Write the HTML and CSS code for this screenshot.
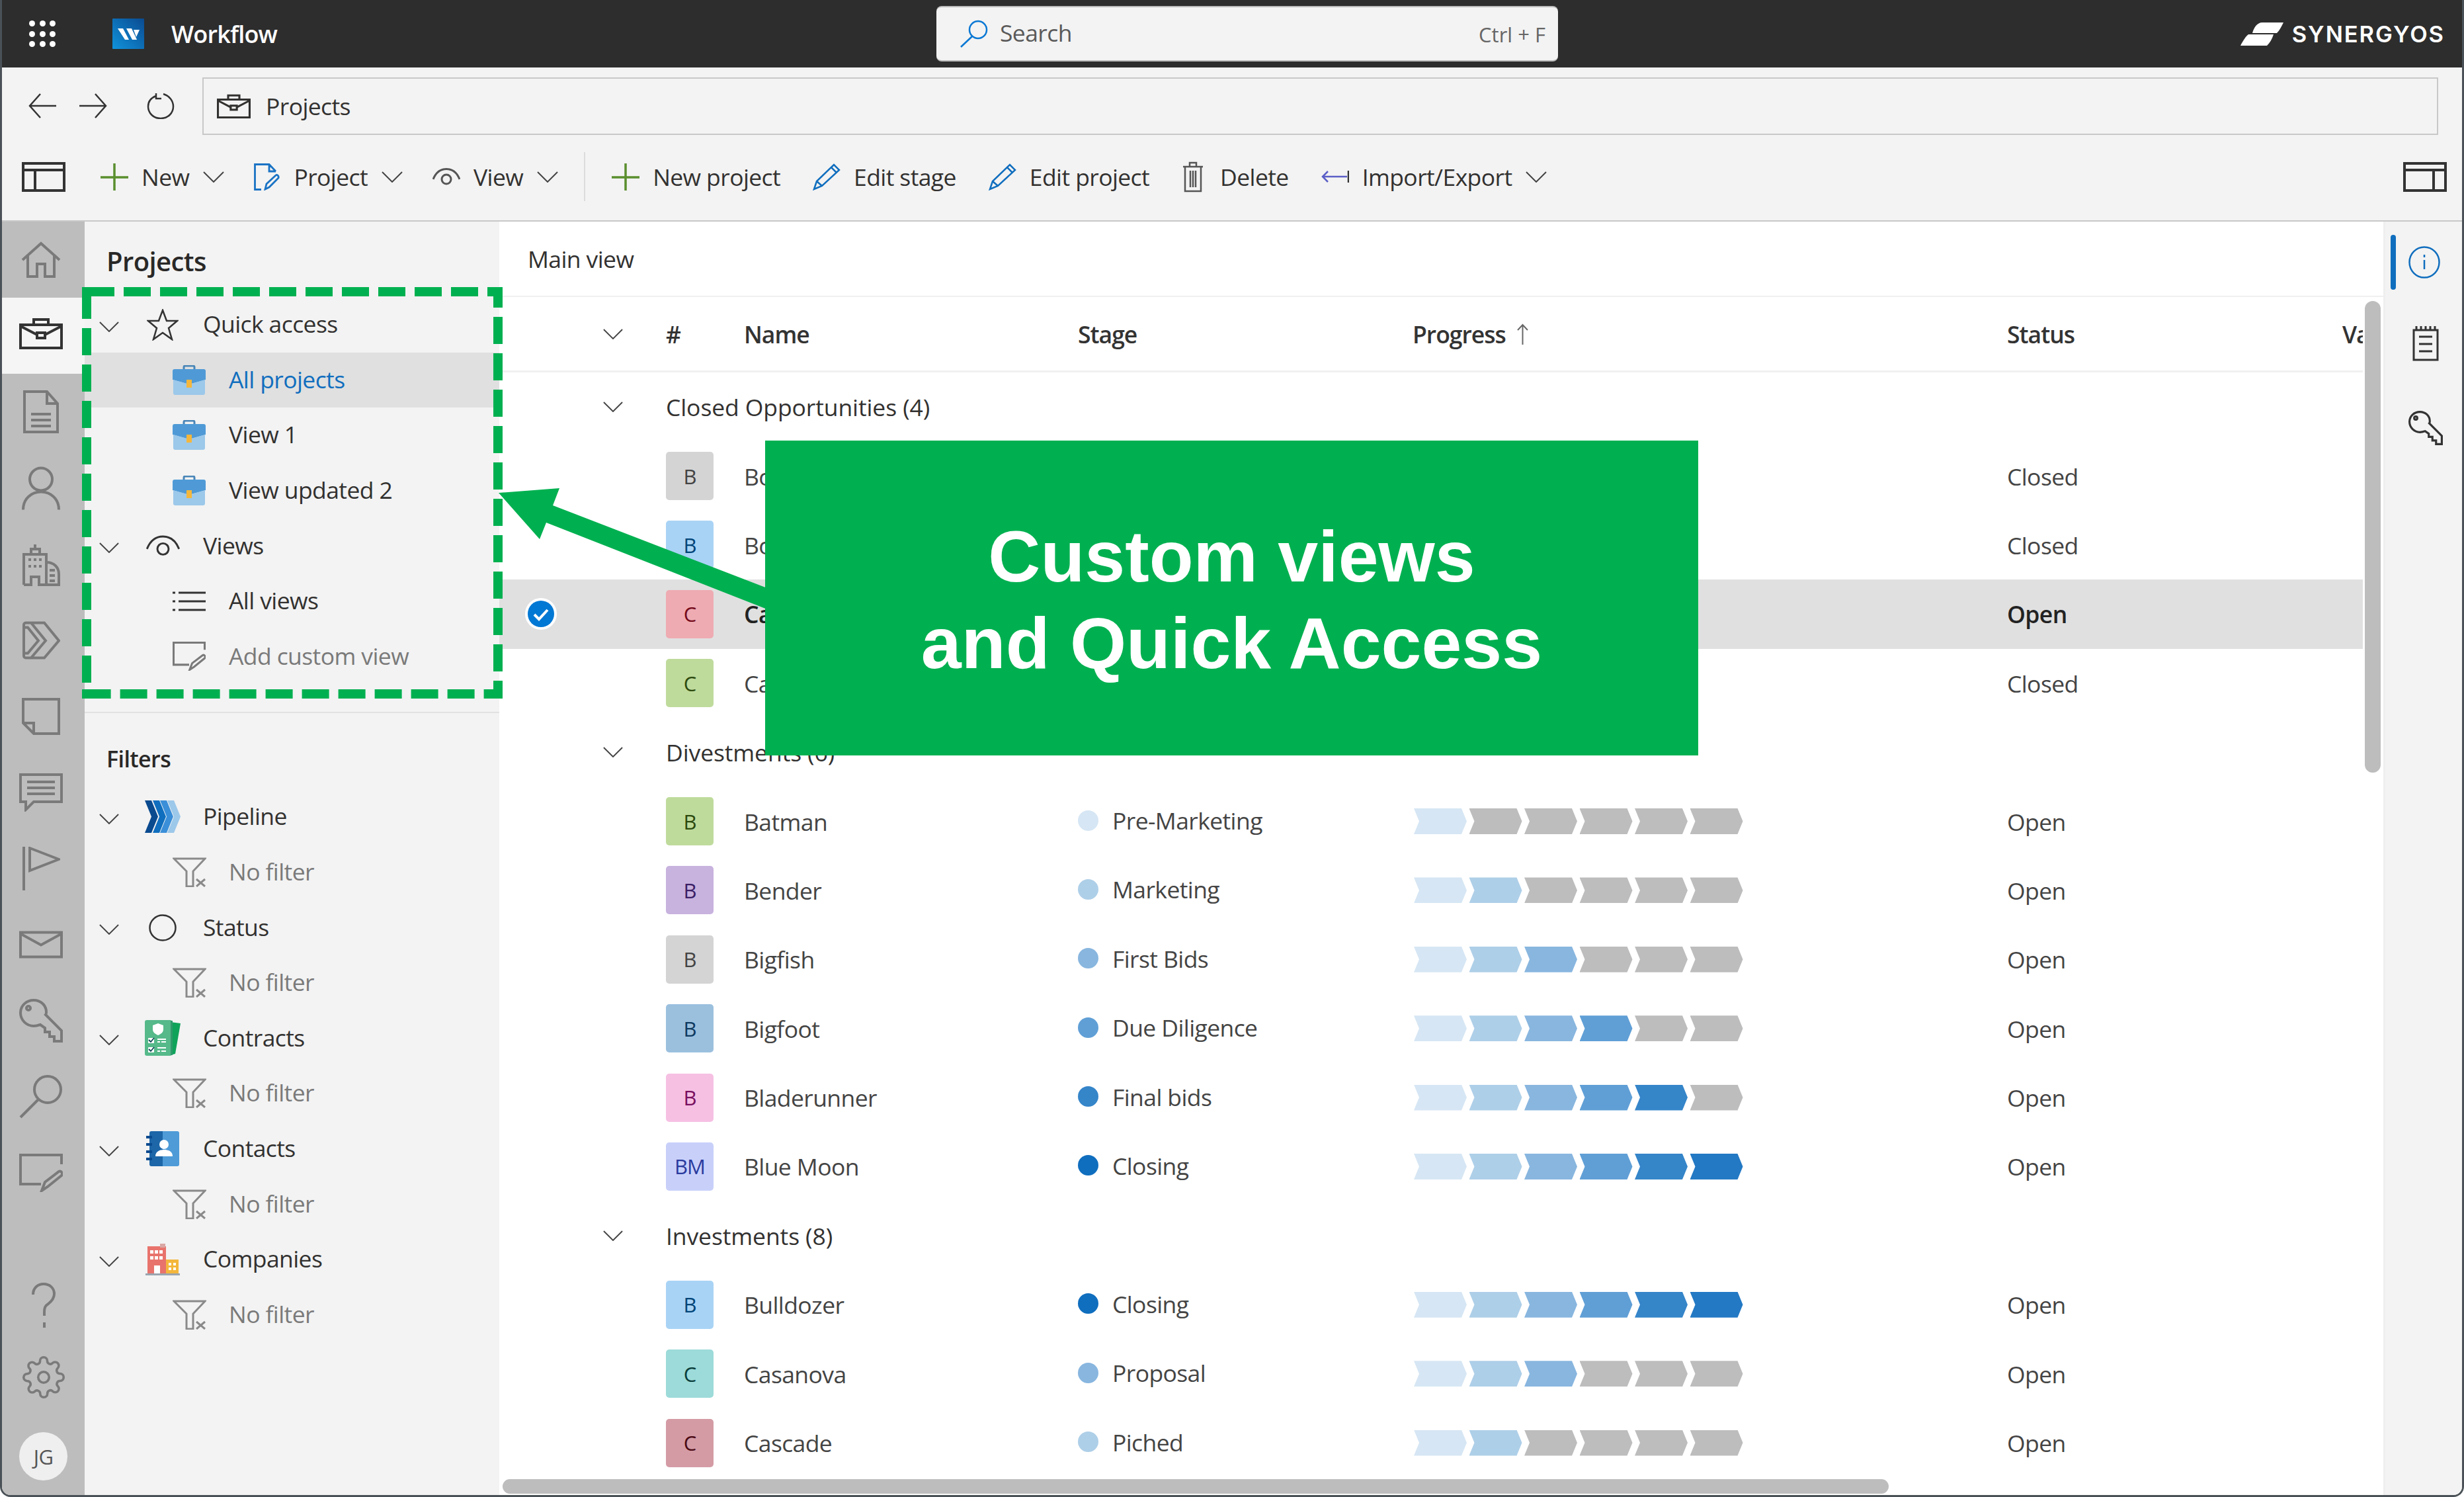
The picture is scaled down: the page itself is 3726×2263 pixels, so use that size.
FILE: index.html
```html
<!DOCTYPE html>
<html lang="en">
<head>
<meta charset="utf-8">
<title>Workflow - Projects</title>
<link rel="stylesheet" href="styles.css">
</head>
<body>
<svg class="defs" aria-hidden="true">
  <symbol id="chev" viewBox="0 0 32 17"><path d="M1 1l15 15L31 1"/></symbol>
  <symbol id="briefcase" viewBox="0 0 66 48"><path d="M2 11h62v35H2z M22 11V3h22v8 M2 13l25 13 M64 13l-25 13"/><rect x="27" y="23" width="12" height="8"/></symbol>
  <symbol id="plus" viewBox="0 0 42 41"><path d="M21 0v41 M0 21h42"/></symbol>
  <symbol id="pencil" viewBox="0 0 42 41"><path d="M2 39l4-12L32 2l8 8-26 24z M6 27l8 7 M28 6l8 8"/></symbol>
  <symbol id="eye" viewBox="0 0 42 26"><path d="M1 17C5 7 12 1.500 21 1.500S37 7 41 17"/><circle cx="21" cy="17" r="7"/></symbol>
  <symbol id="layout" viewBox="0 0 66 45"><path d="M2 2h62v41H2z M2 12h62 M20 12v31"/></symbol>
  <symbol id="bag" viewBox="0 0 50 45"><rect x="17" y="1" width="16" height="8" rx="2" fill="none" stroke="#4a86b8" stroke-width="3"/><path d="M3 6h44a3 3 0 0 1 3 3v13l-25 7-25-7V9a3 3 0 0 1 3-3z" fill="#4f9ad6"/><path d="M1 22l24 7 24-7v20a3 3 0 0 1-3 3H4a3 3 0 0 1-3-3z" fill="#9cc8ea"/><rect x="21" y="22" width="8" height="12" fill="#f4b73c"/></symbol>
  <symbol id="editnote" viewBox="0 0 66 58"><path d="M33 46H2V2h62v14 M34 56l5-13 21-16c3-2 7 3 4 6L43 50z"/></symbol>
  <symbol id="funnel" viewBox="0 0 51 45"><path d="M2 2h47L31 21v23H21V21z M36 33l13 11 M49 33L36 44"/></symbol>
  <symbol id="key" viewBox="0 0 66 66"><path d="M22 2C33 2 41 10 41 20c0 2 0 3-1 4l24 24v16H53v-7h-7v-7h-7v-6l-7-5c-3 1-6 2-10 2C11 41 2 32 2 21S11 2 22 2z"/><circle cx="14" cy="14" r="3"/></symbol>
</svg>

<div class="app">
  <header class="topbar">
    <div class="brand">
      <div class="waffle"><i></i><i></i><i></i><i></i><i></i><i></i><i></i><i></i><i></i></div>
      <svg class="wf-logo" viewBox="0 0 48 46"><defs><linearGradient id="wfg" x1="0" y1="1" x2="1" y2="0"><stop offset="0" stop-color="#1093dc"/><stop offset="1" stop-color="#0a4a90"/></linearGradient></defs><rect width="48" height="46" rx="1" fill="url(#wfg)"/><path d="M8 15h8l9 17h-6z M21 15h8l8 17h-7z M32 17h9l-5 11z" fill="#fff"/></svg>
      <span class="app-name">Workflow</span>
    </div>
    <div class="searchbox">
      <svg class="s-icon" viewBox="0 0 44 42"><circle cx="29" cy="15" r="13"/><path d="M20 25L3 41"/></svg>
      <span class="s-text">Search</span>
      <span class="s-key">Ctrl + F</span>
    </div>
    <div class="synergy">
      <svg class="sy-mark" viewBox="0 0 65 35"><path d="M18 16C20 8 25 0 33 0H65C62 6 59 12 55 16Z M0 35C4 27 8 21 12 18H50C48 25 44 31 40 35Z" fill="#fff"/></svg>
      <span class="sy-text">SYNERGYOS</span>
    </div>
  </header>

  <div class="addressbar">
    <svg class="nav nav-back" viewBox="0 0 42 38"><path d="M18 1L2 19l16 18 M2 19h40"/></svg>
    <svg class="nav nav-fwd" viewBox="0 0 42 38"><path d="M24 1l16 18-16 18 M0 19h40"/></svg>
    <svg class="nav nav-ref" viewBox="0 0 42 40"><path d="M14 5C6 8 2 14 2 21c0 10 8 18 19 18s19-8 19-18c0-9-6-16-15-19 M14 1v8h8"/></svg>
    <div class="address">
      <svg class="addr-icon"><use href="#briefcase"/></svg>
      <span>Projects</span>
    </div>
  </div>

  <nav class="toolbar">
    <svg class="tb-layout"><use href="#layout"/></svg>
    <div class="tool"><svg class="ic-plus"><use href="#plus"/></svg><span>New</span><svg class="tb-chev"><use href="#chev"/></svg></div>
    <div class="tool"><svg class="ic-doc" viewBox="0 0 40 41"><path d="M11 39.500H1.500V1.500H23L33 12 M23 1.500V12H33"/><path d="M17 39l2-8L33 18c2-1.500 5 1 4 4L23 36z"/></svg><span>Project</span><svg class="tb-chev"><use href="#chev"/></svg></div>
    <div class="tool"><svg class="ic-eye"><use href="#eye"/></svg><span>View</span><svg class="tb-chev"><use href="#chev"/></svg></div>
    <div class="tb-sep"></div>
    <div class="tool wide"><svg class="ic-plus"><use href="#plus"/></svg><span>New project</span></div>
    <div class="tool wide"><svg class="ic-pencil"><use href="#pencil"/></svg><span>Edit stage</span></div>
    <div class="tool wide"><svg class="ic-pencil"><use href="#pencil"/></svg><span>Edit project</span></div>
    <div class="tool wide t-del"><svg class="ic-trash" viewBox="0 0 34 47"><path d="M2 8h30 M12 8V2h10v6 M5 8v37h24V8 M13 14v25 M17 14v25 M21 14v25"/></svg><span>Delete</span></div>
    <div class="tool"><svg class="ic-imp" viewBox="0 0 42 18"><path class="purple" d="M10 1L2 9l8 8 M2 9h37"/><path d="M41 0v18"/></svg><span>Import/Export</span><svg class="tb-chev"><use href="#chev"/></svg></div>
    <svg class="tb-layout-r" viewBox="0 0 66 45"><path d="M2 2h62v41H2z M2 12h62 M46 12v31"/></svg>
  </nav>

  <div class="workspace">
    <aside class="rail">
      <div class="rail-item"><svg class="ri w60" viewBox="0 0 60 55"><path d="M2 28L30 3l28 25 M10 21v32h14V34h12v19h14V21"/></svg></div>
      <div class="rail-item active"><svg class="ri w66b"><use href="#briefcase"/></svg></div>
      <div class="rail-item"><svg class="ri w54" viewBox="0 0 54 65"><path d="M2 2h34l16 18v43H2z M36 2v18h16 M12 36h30 M12 45h30 M12 54h30"/></svg></div>
      <div class="rail-item"><svg class="ri w58" viewBox="0 0 58 65"><circle cx="29" cy="19" r="17"/><path d="M2 65c0-16 12-27 27-27s27 11 27 27"/></svg></div>
      <div class="rail-item"><svg class="ri w58" viewBox="0 0 58 66"><path d="M3 64V18h34v46 M3 64h11V52h12v12h11 M14 18v-8h13v8 M20 10V3 M10 26h4 M18 26h4 M26 26h4 M10 36h4 M18 36h4 M26 36h4 M37 30c12 0 19 8 19 18v16H37 M42 42h8 M42 50h8 M42 58h8"/></svg></div>
      <div class="rail-item"><svg class="ri w58" viewBox="0 0 58 59"><path d="M3 6a3 3 0 0 1 3-3h28l22 27-22 26H6a3 3 0 0 1-3-3z M14 3l22 27-22 26 M3 10h6l16 20L9 49H3"/></svg></div>
      <div class="rail-item"><svg class="ri w58" viewBox="0 0 58 56"><path d="M2 2h54v52H18L2 38z M2 38h16v16"/></svg></div>
      <div class="rail-item"><svg class="ri w66" viewBox="0 0 66 58"><path d="M2 2h62v41H22L10 55V43H2z M12 13h42 M12 22h42 M12 31h42"/></svg></div>
      <div class="rail-item"><svg class="ri w58" viewBox="0 0 58 66"><path d="M3 0v66 M12 2l44 17-44 17z"/></svg></div>
      <div class="rail-item"><svg class="ri w66" viewBox="0 0 66 41"><path d="M2 2h62v37H2z M2 4l31 17L64 4"/></svg></div>
      <div class="rail-item"><svg class="ri w66k"><use href="#key"/></svg></div>
      <div class="rail-item"><svg class="ri w66k" viewBox="0 0 66 66"><circle cx="43" cy="22" r="20"/><path d="M29 37L2 64"/></svg></div>
      <div class="rail-item"><svg class="ri w66"><use href="#editnote"/></svg></div>
      <div class="rail-bottom">
        <svg class="ri help" viewBox="0 0 38 68"><path d="M3 18C3 8 10 2 19 2s16 6 16 15c0 7-4 11-9 15-5 3-6 6-6 13v5 M20 60v8"/></svg>
        <svg class="ri gear" viewBox="0 0 24 24"><circle cx="12" cy="12" r="3"/><path d="M19.4 15a1.65 1.65 0 0 0 .33 1.82l.06.06a2 2 0 0 1 0 2.83 2 2 0 0 1-2.83 0l-.06-.06a1.65 1.65 0 0 0-1.82-.33 1.65 1.65 0 0 0-1 1.51V21a2 2 0 0 1-2 2 2 2 0 0 1-2-2v-.09A1.65 1.65 0 0 0 9 19.4a1.65 1.65 0 0 0-1.82.33l-.06.06a2 2 0 0 1-2.83 0 2 2 0 0 1 0-2.83l.06-.06a1.65 1.65 0 0 0 .33-1.82 1.65 1.65 0 0 0-1.51-1H3a2 2 0 0 1-2-2 2 2 0 0 1 2-2h.09A1.65 1.65 0 0 0 4.6 9a1.65 1.65 0 0 0-.33-1.82l-.06-.06a2 2 0 0 1 0-2.83 2 2 0 0 1 2.83 0l.06.06a1.65 1.65 0 0 0 1.82.33H9a1.65 1.65 0 0 0 1-1.51V3a2 2 0 0 1 2-2 2 2 0 0 1 2 2v.09a1.65 1.65 0 0 0 1 1.51 1.65 1.65 0 0 0 1.82-.33l.06-.06a2 2 0 0 1 2.83 0 2 2 0 0 1 0 2.83l-.06.06a1.65 1.65 0 0 0-.33 1.82V9a1.65 1.65 0 0 0 1.51 1H21a2 2 0 0 1 2 2 2 2 0 0 1-2 2h-.09a1.65 1.65 0 0 0-1.51 1z"/></svg>
        <div class="avatar">JG</div>
      </div>
    </aside>

    <section class="panel">
      <h2 class="panel-title">Projects</h2>
      <div class="tree-row"><svg class="tchev"><use href="#chev"/></svg><span class="tico"><svg class="ic-star" viewBox="0 0 48 48"><path d="M24 2l6 16h16L33 29l5 17-14-10-14 10 5-17L2 18h16z"/></svg></span><span class="lbl">Quick access</span></div>
      <div class="sub-row selected"><span class="sico"><svg class="ic-bag"><use href="#bag"/></svg></span><span class="lbl">All projects</span></div>
      <div class="sub-row"><span class="sico"><svg class="ic-bag"><use href="#bag"/></svg></span><span class="lbl">View 1</span></div>
      <div class="sub-row"><span class="sico"><svg class="ic-bag"><use href="#bag"/></svg></span><span class="lbl">View updated 2</span></div>
      <div class="tree-row"><svg class="tchev"><use href="#chev"/></svg><span class="tico"><svg class="ic-veye"><use href="#eye"/></svg></span><span class="lbl">Views</span></div>
      <div class="sub-row"><span class="sico"><svg class="ic-list" viewBox="0 0 52 34"><path d="M1 4h4 M1 17h4 M1 30h4 M10 4h41 M10 17h41 M10 30h41"/></svg></span><span class="lbl">All views</span></div>
      <div class="sub-row muted"><span class="sico"><svg class="ic-add"><use href="#editnote"/></svg></span><span class="lbl">Add custom view</span></div>

      <div class="panel-rule"></div>
      <h3 class="filters-title">Filters</h3>

      <div class="tree-row"><svg class="tchev"><use href="#chev"/></svg><span class="tico"><svg class="ic-pipe" viewBox="0 0 54 49"><path d="M0 0h10l10 24.500L10 49H0l10-24.500z" fill="#0a4a8f"/><path d="M12 0h10l10 24.500L22 49H12l10-24.500z" fill="#106ebe"/><path d="M23 0h10l10 24.500L33 49H23l10-24.500z" fill="#3b8fd9"/><path d="M34 0h10l10 24.500L44 49H34l10-24.500z" fill="#9cc8ea"/></svg></span><span class="lbl">Pipeline</span></div>
      <div class="sub-row muted"><span class="sico"><svg class="ic-funnel"><use href="#funnel"/></svg></span><span class="lbl">No filter</span></div>

      <div class="tree-row"><svg class="tchev"><use href="#chev"/></svg><span class="tico"><svg class="ic-circle" viewBox="0 0 42 41"><ellipse cx="21" cy="20.500" rx="19.500" ry="19"/></svg></span><span class="lbl">Status</span></div>
      <div class="sub-row muted"><span class="sico"><svg class="ic-funnel"><use href="#funnel"/></svg></span><span class="lbl">No filter</span></div>

      <div class="tree-row"><svg class="tchev"><use href="#chev"/></svg><span class="tico"><svg class="ic-contract" viewBox="0 0 54 54"><path d="M39 3L54 5 46 51 39 53z" fill="#0fa35a"/><rect width="41" height="54" rx="3" fill="#55b98a"/><rect x="39" y="1" width="3" height="52" fill="#2f9a6c"/><path d="M20 5l8 3v6c0 5-4 7-8 9-4-2-8-4-8-9V8z" fill="#fff"/><rect x="5" y="27" width="9" height="8" rx="1" fill="#fff"/><rect x="5" y="41" width="9" height="8" rx="1" fill="#fff"/><path d="M6 30l3 3 5-6 M6 44l3 3 5-6" fill="none" stroke="#145" stroke-width="1.800"/><path d="M19 29h13 M19 33h4 M25 33h7 M19 42h13 M19 47h4 M25 47h7" fill="none" stroke="#fff" stroke-width="1.800"/></svg></span><span class="lbl">Contracts</span></div>
      <div class="sub-row muted"><span class="sico"><svg class="ic-funnel"><use href="#funnel"/></svg></span><span class="lbl">No filter</span></div>

      <div class="tree-row"><svg class="tchev"><use href="#chev"/></svg><span class="tico"><svg class="ic-contact" viewBox="0 0 50 53"><path d="M8 0h17v53H8a3 3 0 0 1-3-3V3a3 3 0 0 1 3-3z" fill="#1d66a8"/><path d="M25 0h22a3 3 0 0 1 3 3v47a3 3 0 0 1-3 3H25z" fill="#4e9bd8"/><path d="M0 9h9 M0 20h9 M0 31h9 M0 42h9" fill="none" stroke="#0a4a8f" stroke-width="4"/><circle cx="27" cy="20" r="7" fill="#fff"/><path d="M14 38c0-7 6-10 13-10s13 3 13 10z" fill="#fff"/></svg></span><span class="lbl">Contacts</span></div>
      <div class="sub-row muted"><span class="sico"><svg class="ic-funnel"><use href="#funnel"/></svg></span><span class="lbl">No filter</span></div>

      <div class="tree-row"><svg class="tchev"><use href="#chev"/></svg><span class="tico"><svg class="ic-company" viewBox="0 0 52 48"><rect x="3" y="4" width="28" height="42" fill="#e8736c"/><rect x="22" y="0" width="8" height="6" fill="#d9a7a4"/><rect x="31" y="24" width="19" height="22" fill="#f4b73c"/><path d="M7 10h5v5H7z M14 10h5v5h-5z M21 10h5v5h-5z M7 19h5v5H7z M14 19h5v5h-5z M21 19h5v5h-5z M35 29h4v4h-4z M42 29h4v4h-4z M35 36h4v4h-4z M42 36h4v4h-4z" fill="#fff"/><rect x="13" y="33" width="9" height="13" fill="#fff"/><rect y="45" width="52" height="3" fill="#9aa5b0"/></svg></span><span class="lbl">Companies</span></div>
      <div class="sub-row muted"><span class="sico"><svg class="ic-funnel"><use href="#funnel"/></svg></span><span class="lbl">No filter</span></div>
    </section>

    <main class="content">
      <div class="view-title">Main view</div>
      <div class="grid-head tr">
        <span class="c-sel"><svg class="gchev"><use href="#chev"/></svg></span><span>#</span><span>Name</span><span>Stage</span>
        <span class="c-prog">Progress<svg class="ic-up" viewBox="0 0 19 32"><path d="M9.500 32V2 M2 10l7.500-8 7.500 8"/></svg></span><span>Status</span><span>Value</span>
      </div>
      <div class="grid-body">
        <div class="tr group"><span class="c-sel"><svg class="gchev"><use href="#chev"/></svg></span><span class="span-all">Closed Opportunities (4)</span></div>
        <div class="tr"><span></span><span><b class="thumb th-grey">B</b></span><span>Bo</span><span></span><span></span><span>Closed</span></div>
        <div class="tr"><span></span><span><b class="thumb th-blue">B</b></span><span>Bo</span><span></span><span></span><span>Closed</span></div>
        <div class="tr sel"><span class="c-check"><svg class="ic-check" viewBox="0 0 50 50"><circle cx="25" cy="25" r="24" fill="#fff"/><circle cx="25" cy="25" r="20" fill="#0078d4"/><path d="M15 26l7 7 13-14" fill="none" stroke="#fff" stroke-width="4"/></svg></span><span><b class="thumb th-red">C</b></span><span>Ca</span><span></span><span></span><span>Open</span></div>
        <div class="tr"><span></span><span><b class="thumb th-green">C</b></span><span>Ca</span><span></span><span></span><span>Closed</span></div>

        <div class="tr group"><span class="c-sel"><svg class="gchev"><use href="#chev"/></svg></span><span class="span-all">Divestments (6)</span></div>
        <div class="tr"><span></span><span><b class="thumb th-green">B</b></span><span>Batman</span><span class="stage"><i class="dot s1"></i>Pre-Marketing</span><span class="prog"><i class="s1"></i><i></i><i></i><i></i><i></i><i></i></span><span>Open</span></div>
        <div class="tr"><span></span><span><b class="thumb th-purple">B</b></span><span>Bender</span><span class="stage"><i class="dot s2"></i>Marketing</span><span class="prog"><i class="s1"></i><i class="s2"></i><i></i><i></i><i></i><i></i></span><span>Open</span></div>
        <div class="tr"><span></span><span><b class="thumb th-grey">B</b></span><span>Bigfish</span><span class="stage"><i class="dot s3"></i>First Bids</span><span class="prog"><i class="s1"></i><i class="s2"></i><i class="s3"></i><i></i><i></i><i></i></span><span>Open</span></div>
        <div class="tr"><span></span><span><b class="thumb th-steel">B</b></span><span>Bigfoot</span><span class="stage"><i class="dot s4"></i>Due Diligence</span><span class="prog"><i class="s1"></i><i class="s2"></i><i class="s3"></i><i class="s4"></i><i></i><i></i></span><span>Open</span></div>
        <div class="tr"><span></span><span><b class="thumb th-pink">B</b></span><span>Bladerunner</span><span class="stage"><i class="dot s5"></i>Final bids</span><span class="prog"><i class="s1"></i><i class="s2"></i><i class="s3"></i><i class="s4"></i><i class="s5"></i><i></i></span><span>Open</span></div>
        <div class="tr"><span></span><span><b class="thumb th-peri">BM</b></span><span>Blue Moon</span><span class="stage"><i class="dot s6"></i>Closing</span><span class="prog"><i class="s1"></i><i class="s2"></i><i class="s3"></i><i class="s4"></i><i class="s5"></i><i class="s6"></i></span><span>Open</span></div>

        <div class="tr group"><span class="c-sel"><svg class="gchev"><use href="#chev"/></svg></span><span class="span-all">Investments (8)</span></div>
        <div class="tr"><span></span><span><b class="thumb th-blue">B</b></span><span>Bulldozer</span><span class="stage"><i class="dot s6"></i>Closing</span><span class="prog"><i class="s1"></i><i class="s2"></i><i class="s3"></i><i class="s4"></i><i class="s5"></i><i class="s6"></i></span><span>Open</span></div>
        <div class="tr"><span></span><span><b class="thumb th-teal">C</b></span><span>Casanova</span><span class="stage"><i class="dot s3"></i>Proposal</span><span class="prog"><i class="s1"></i><i class="s2"></i><i class="s3"></i><i></i><i></i><i></i></span><span>Open</span></div>
        <div class="tr"><span></span><span><b class="thumb th-rose">C</b></span><span>Cascade</span><span class="stage"><i class="dot s2"></i>Piched</span><span class="prog"><i class="s1"></i><i class="s2"></i><i></i><i></i><i></i><i></i></span><span>Open</span></div>
      </div>
      <div class="vscroll"></div>
      <div class="hscroll"></div>
    </main>

    <aside class="rightrail">
      <div class="rr-item current"><svg class="ic-info" viewBox="0 0 48 49"><ellipse cx="24" cy="24.500" rx="22.500" ry="23"/><path d="M24 21v14 M24 13v4"/></svg></div>
      <div class="rr-item"><svg class="ic-pad" viewBox="0 0 40 53"><path d="M2 6h36v45H2z M10 16h20 M10 27h20 M10 38h20 M6 0v6 M13 0v6 M20 0v6 M27 0v6 M34 0v6"/></svg></div>
      <div class="rr-item rr-key"><svg class="ic-key"><use href="#key"/></svg></div>
    </aside>
  </div>
</div>

<div class="callout">Custom views<br>and Quick Access</div>
<svg class="annot" viewBox="0 0 3726 2263" aria-hidden="true">
  <path class="annot-fill" d="M124 434h14v14h-14z M746 434h14v14h-14z M124 1042h14v14h-14z M746 1042h14v14h-14z"/>
  <line class="dash" x1="132" y1="441" x2="760" y2="441"/>
  <line class="dash" x1="131" y1="441" x2="131" y2="1042"/>
  <line class="dash dash-r" x1="753" y1="434" x2="753" y2="1056"/>
  <line class="dash dash-b" x1="124" y1="1049" x2="760" y2="1049"/>
  <path class="annot-fill" d="M754 745L846 738L836 764L1160 889V921L826 790L816 815Z"/>
</svg>
</body>
</html>
```
FILE: styles.css
```css
* { box-sizing: border-box; }
html, body { margin: 0; padding: 0; background: #fff; }
body {
  width: 3726px; height: 2263px; position: relative; overflow: hidden;
  font-family: "Open Sans", "Noto Sans", sans-serif; font-size: 35.5px; color: #323130; letter-spacing: -0.6px;
}
svg { display: block; flex: none; fill: none; stroke: currentColor; }
.defs { position: absolute; width: 0; height: 0; }

.app {
  width: 3726px; height: 2263px; display: flex; flex-direction: column; overflow: hidden;
  border: solid #4b5257; border-width: 0 3px 3px 3px; border-radius: 0 0 16px 16px; background: #f3f3f3;
}

/* top bar */
.topbar { height: 102px; flex: none; background: #2d2d2d; display: grid; grid-template-columns: 1413px 940px 1fr; align-items: center; }
.brand { display: flex; align-items: center; padding-left: 41px; }
.waffle { width: 41px; display: grid; grid-template-columns: repeat(3, 9px); gap: 6.500px; }
.waffle i { height: 9px; width: 9px; border-radius: 50%; background: #fff; }
.wf-logo { width: 48px; height: 46px; margin-left: 85px; stroke: none; }
.app-name { margin-left: 41px; color: #fff; font-weight: 600; font-size: 36px; letter-spacing: -0.8px; }
.searchbox { height: 84px; background: #f3f3f3; border-radius: 8px; border-bottom: 2px solid #bbb; border-top: 2px solid #bbb; display: flex; align-items: center; padding: 0 19px 0 34px; }
.s-icon { width: 44px; height: 42px; color: #0a78d4; stroke-width: 2.500; }
.s-text { margin-left: 18px; padding-bottom: 4px; color: #5a5a5a; }
.s-key { margin-left: auto; font-size: 31px; letter-spacing: 0; color: #666; padding-top: 2px; }
.synergy { display: flex; align-items: center; justify-content: flex-end; padding-right: 26px; color: #fff; }
.sy-mark { width: 65px; height: 35px; stroke: none; }
.sy-text { margin-left: 13px; font-family: Inter, "Liberation Sans", sans-serif; font-weight: 600; font-size: 34.500px; letter-spacing: 1.950px; }

/* address bar */
.addressbar { height: 120px; flex: none; display: flex; align-items: center; padding-right: 36px; padding-bottom: 4px; }
.nav { width: 42px; height: 38px; color: #333; stroke-width: 2.500; }
.nav-back { margin-left: 40px; }
.nav-fwd { margin-left: 35px; }
.nav-ref { margin-left: 60px; height: 40px; }
.address { flex: 1; height: 87px; margin-left: 42px; border: 2px solid #c8c8c8; display: flex; align-items: center; padding-left: 20px; color: #323130; }
.addr-icon { width: 51px; height: 39px; margin-right: 23px; stroke-width: 4; }

/* toolbar */
.toolbar { height: 113px; flex: none; display: flex; align-items: center; padding-left: 30px; padding-bottom: 21px; border-bottom: 2px solid #c8c8c8; }
.tb-layout { width: 66px; height: 45px; stroke-width: 4; color: #333; margin-right: 53px; }
.tb-layout-r { width: 66px; height: 45px; stroke-width: 4; color: #333; margin-left: auto; margin-right: 23px; }
.tool { display: flex; align-items: center; margin-right: 45px; }
.tool.wide { margin-right: 49px; }
.tool span { margin-left: 20px; }
.t-del span { margin-left: 24px; }
.tool svg { height: 41px; }
.tb-chev.tb-chev { width: 32px; height: 17px; margin-left: 21px; stroke-width: 2; color: #444; }
.ic-plus { width: 42px; color: #5a8f2e; stroke-width: 3.500; }
.ic-doc { width: 40px; stroke-width: 2.800; color: #1a73c4; }
.ic-eye.ic-eye { width: 42px; height: 26px; color: #555; stroke-width: 3; }
.ic-pencil { width: 42px; color: #106ebe; stroke-width: 2.500; }
.ic-trash.ic-trash { width: 34px; height: 47px; color: #555; stroke-width: 2.500; }
.ic-imp.ic-imp { width: 42px; height: 18px; color: #333; stroke-width: 2.500; }
.ic-imp .purple { stroke: #5b5fc7; }
.tb-sep { width: 2px; height: 74px; background: #dcdcdc; margin: 0 40px 0 -6px; }

/* workspace */
.workspace { flex: 1; min-height: 0; display: flex; }
.rail { width: 125px; flex: none; background: #bdbdbd; display: flex; flex-direction: column; color: #7a7a7a; }
.rail-item { height: 115px; flex: none; display: flex; align-items: center; justify-content: center; padding-right: 7px; }
.rail-item.active { background: #f5f5f5; color: #333; }
.ri { stroke-width: 4; height: auto; }
.w54 { width: 54px; height: 65px; } .w58 { width: 58px; height: 66px; } .w60 { width: 60px; height: 55px; } .w66 { width: 66px; height: 58px; } .w66k { width: 66px; height: 66px; }
.w66b { width: 66px; height: 48px; margin-bottom: 8px; }
.rail-bottom { margin-top: auto; display: flex; flex-direction: column; align-items: center; padding-bottom: 22px; }
.help { width: 38px; height: 68px; }
.gear { width: 66px; height: 66px; margin: 42px 0 50px; stroke-width: 1.300; }
.avatar { width: 73px; height: 73px; border-radius: 50%; background: #efefef; color: #555; font-size: 31px; font-weight: 500; display: flex; align-items: center; justify-content: center; }

/* side panel */
.panel { width: 627px; flex: none; background: #f3f3f3; }
.panel-title { margin: 0; height: 114px; padding: 38px 0 0 33px; font-size: 40px; line-height: 44px; font-weight: 600; color: #292827; }
.tree-row, .sub-row { height: 83.600px; display: flex; align-items: center; }
.tree-row { padding-left: 22px; }
.lbl { padding-bottom: 3px; }
.tchev { width: 30px; height: 16px; stroke-width: 2; color: #444; margin-top: 6px; }
.tico { width: 60px; margin: 0 31px 0 36px; display: flex; justify-content: center; }
.ic-star { width: 48px; height: 48px; stroke-width: 2.500; color: #333; }
.ic-veye { width: 51px; height: 32px; stroke-width: 2.400; color: #333; }
.ic-circle { width: 42px; height: 41px; stroke-width: 2.500; color: #333; }
.ic-pipe { width: 54px; height: 49px; stroke: none; }
.ic-contract { width: 54px; height: 54px; stroke: none; }
.ic-contact { width: 50px; height: 53px; stroke: none; }
.ic-company { width: 52px; height: 48px; stroke: none; }
.sub-row { padding-left: 132px; }
.sico { width: 52px; margin-right: 34px; display: flex; justify-content: center; }
.ic-bag { width: 50px; height: 45px; stroke: none; }
.sub-row.selected { background: #e0e0e0; color: #106ebe; font-weight: 500; }
.sub-row.muted { color: #7a7a7a; }
.ic-list { width: 52px; height: 34px; stroke-width: 3; color: #333; }
.ic-add { width: 50px; height: 44px; stroke-width: 4; color: #7a7a7a; }
.ic-funnel { width: 51px; height: 45px; stroke-width: 3; color: #8a8a8a; }
.panel-rule { height: 2px; margin-top: 42px; background: #e2e2e2; }
.filters-title { margin: 0; height: 115px; padding: 48px 0 0 33px; font-size: 34px; line-height: 42px; font-weight: 600; color: #292827; }

/* content */
.content { width: 2849px; flex: none; background: #fff; position: relative; overflow: hidden; }
.view-title { height: 114px; padding-left: 43px; display: flex; align-items: center; border-bottom: 2px solid #f0f0f0; }
.tr { width: 2818px; height: 104.400px; display: grid; grid-template-columns: 252px 118px 505px 506px 899px 507px 1fr; align-items: center; overflow: hidden; color: #444; }
.grid-head { height: 114px; font-weight: 600; color: #333; border-bottom: 3px solid #f0f0f0; letter-spacing: -1px; }
.c-sel { padding-left: 157px; }
.gchev { width: 30px; height: 16px; stroke-width: 2; color: #444; }
.c-prog { display: flex; align-items: center; gap: 16px; }
.ic-up { width: 19px; height: 32px; stroke-width: 2; color: #666; }
.group { color: #323130; }
.span-all { grid-column: 2 / -1; font-weight: 500; white-space: nowrap; letter-spacing: -0.1px; }
.sel { background: #e0e0e0; color: #222; font-weight: 600; }
.c-check { padding-left: 38px; }
.ic-check { width: 50px; height: 50px; stroke: none; }
.thumb { width: 72px; height: 73px; border-radius: 5px; display: flex; align-items: center; justify-content: center; font-size: 31px; font-weight: 400; letter-spacing: -1px; }
.th-grey { background: #d4d4d4; color: #444; }
.th-blue { background: #a9d3f5; color: #004578; }
.th-red { background: #eeabb2; color: #750b1c; }
.th-green { background: #bfdb9c; color: #2d4a0e; }
.th-purple { background: #c8b2de; color: #3b1f66; }
.th-steel { background: #9bc0de; color: #0f3a60; }
.th-pink { background: #f6c0e3; color: #7a1060; }
.th-peri { background: #c8d0fa; color: #2a3a9e; }
.th-teal { background: #9cdbd9; color: #0a3d3b; }
.th-rose { background: #d49ba5; color: #4a0a14; }
.stage { display: flex; align-items: center; padding-bottom: 3px; }
.dot { width: 31px; height: 31px; border-radius: 50%; margin-right: 21px; }
.prog { display: flex; gap: 3.500px; padding-left: 2px; }
.prog i { width: 80px; height: 39px; background: #bdbdbd; clip-path: polygon(0 0, 90% 0, 100% 50%, 90% 100%, 0 100%, 10% 50%); }
.dot.s1, .prog .s1 { background: #d6e6f4; }
.dot.s2, .prog .s2 { background: #aecfe8; }
.dot.s3, .prog .s3 { background: #88b6df; }
.dot.s4, .prog .s4 { background: #609fd6; }
.dot.s5, .prog .s5 { background: #3585c9; }
.prog .s6 { background: #2379c4; }
.dot.s6 { background: #106ebe; }
.vscroll { position: absolute; left: 2821px; top: 120px; width: 24px; height: 713px; border-radius: 12px; background: #bdbdbd; }
.hscroll { position: absolute; left: 5px; top: 1901px; width: 2096px; height: 22px; border-radius: 11px; background: #bdbdbd; }

/* right rail */
.rightrail { flex: 1; background: #f3f3f3; border-left: 3px solid #efefef; padding-top: 21px; }
.rr-item { height: 83px; position: relative; display: flex; align-items: center; padding-left: 35px; margin-bottom: 40px; }
.rr-item.current { margin-top: -1px; }
.rr-item.current::before { content: ""; position: absolute; left: 8px; top: 0; width: 8px; height: 83px; border-radius: 4px; background: #106ebe; }
.rr-key { padding-top: 8px; }
.ic-info { width: 48px; height: 49px; color: #106ebe; stroke-width: 2.500; }
.ic-pad { width: 40px; height: 53px; color: #333; stroke-width: 3; margin-left: 6px; }
.ic-key { width: 52px; height: 52px; color: #333; stroke-width: 4; }

/* overlays */
.callout { position: absolute; left: 1157px; top: 666px; width: 1411px; height: 476px; background: #00b050; color: #fff; font-family: "Liberation Sans", Arial, sans-serif; font-weight: 700; font-size: 109.500px; line-height: 131px; text-align: center; padding-top: 110px; letter-spacing: 0; }
.annot { position: absolute; left: 0; top: 0; width: 3726px; height: 2263px; pointer-events: none; stroke: none; }
.annot-fill { fill: #00b050; }
.dash { stroke: #00b050; stroke-width: 14; stroke-dasharray: 41 14; }
.dash-r { stroke-dashoffset: 10; }
.dash-b { stroke-dashoffset: 52.400; }
```
